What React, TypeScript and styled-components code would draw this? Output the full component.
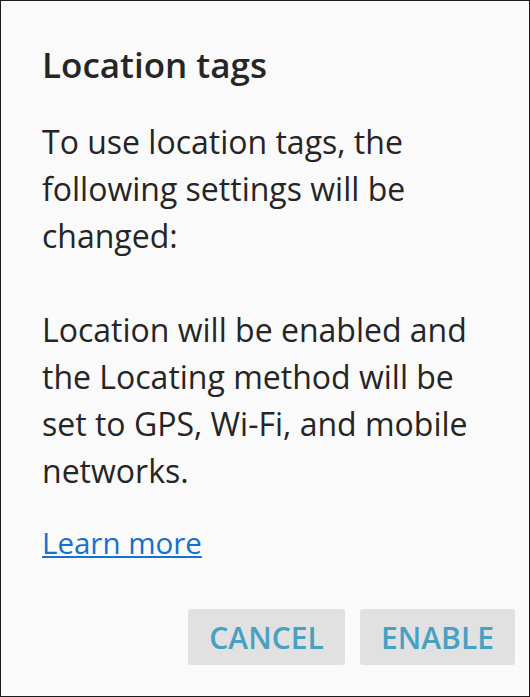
import React from "react";
import styled, { createGlobalStyle } from "styled-components";

const Global = createGlobalStyle`
  html, body { margin: 0; padding: 0; background: #fafafa; }
  * { box-sizing: border-box; }
`;

const Dialog = styled.div`
  width: 530px;
  height: 697px;
  border: 1px solid #1c1c1c;
  background: #fafafa;
  display: flex;
  flex-direction: column;
  padding: 42px 14px 0 41px;
  font-family: "Open Sans", "Noto Sans", sans-serif;
  color: #252525;
`;

const Title = styled.h1`
  margin: 0;
  font-size: 35px;
  line-height: 44px;
  font-weight: 600;
  color: #262626;
`;

const Body = styled.p<{ $gap: number }>`
  margin: ${(p) => p.$gap}px 0 0;
  font-size: 32px;
  line-height: 47px;
  font-weight: 400;
`;

const Link = styled.a`
  margin-top: 25px;
  align-self: flex-start;
  font-size: 29.5px;
  line-height: 47px;
  color: #1670d0;
  text-decoration: underline;
  text-underline-offset: 2px;
  text-decoration-thickness: 2px;
`;

const Actions = styled.div`
  margin-top: 43px;
  display: flex;
  justify-content: flex-end;
  gap: 15px;
`;

const Button = styled.button<{ $w: number }>`
  width: ${(p) => p.$w}px;
  height: 56px;
  border: none;
  border-radius: 3px;
  background: #e1e1e1;
  color: #4aa0c0;
  font-family: "Open Sans", "Noto Sans", sans-serif;
  font-size: 30px;
  font-weight: 600;
  padding: 0;
`;

export default function App() {
  return (
    <>
      <Global />
      <Dialog>
        <Title>Location tags</Title>
        <Body $gap={31}>
          To use location tags, the
          <br />
          following settings will be
          <br />
          changed:
        </Body>
        <Body $gap={47}>
          Location will be enabled and
          <br />
          the Locating method will be
          <br />
          set to GPS, Wi-Fi, and mobile
          <br />
          networks.
        </Body>
        <Link href="#">Learn more</Link>
        <Actions>
          <Button $w={157}>CANCEL</Button>
          <Button $w={155}>ENABLE</Button>
        </Actions>
      </Dialog>
    </>
  );
}
